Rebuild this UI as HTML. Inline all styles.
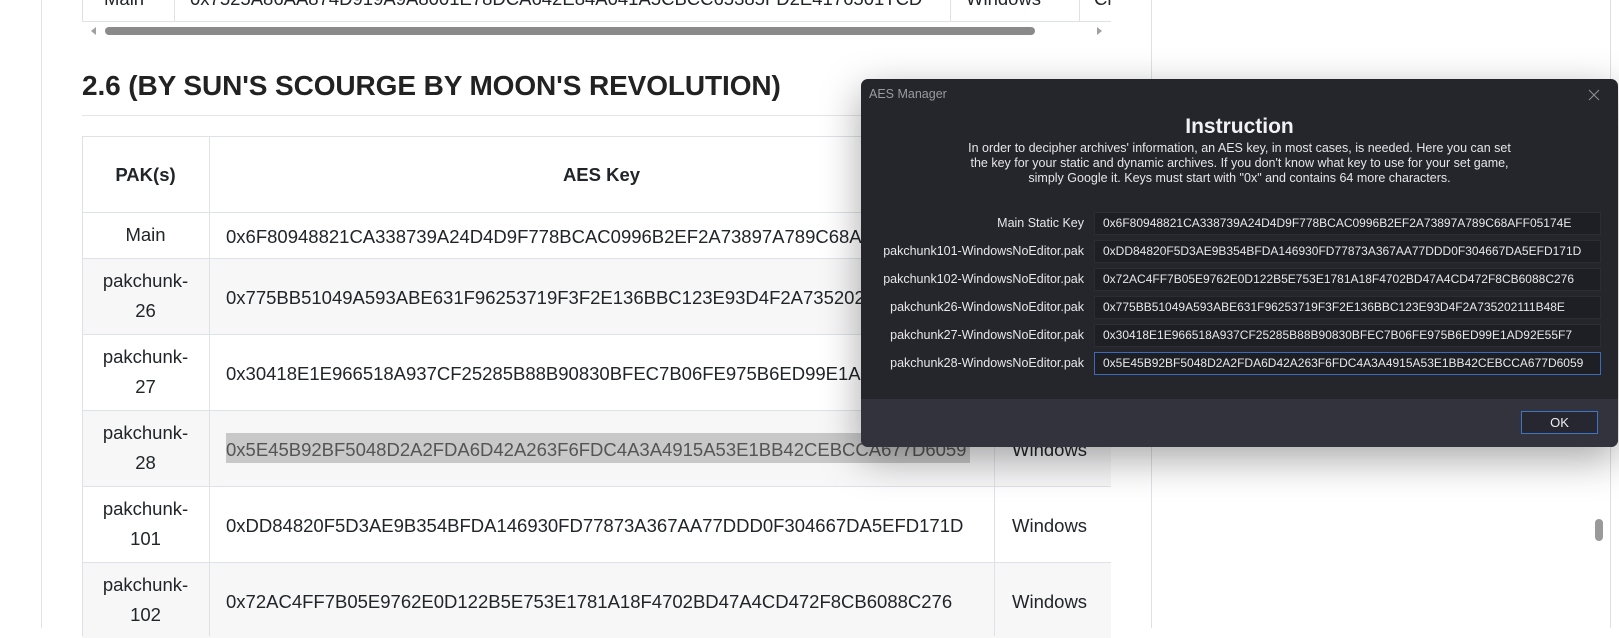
<!DOCTYPE html>
<html><head><meta charset="utf-8"><style>
*{margin:0;padding:0;box-sizing:border-box}
body{width:1619px;height:628px;overflow:hidden;background:#fff;font-family:"Liberation Sans",sans-serif;color:#212529;position:relative}
.a{position:absolute}
.vl{position:absolute;width:1px;background:#dee2e6}
.hl{position:absolute;height:1px;background:#dee2e6}
.t{position:absolute;font-size:18.5px;white-space:nowrap}
.c{text-align:center;line-height:30px}
.dl{position:absolute;right:535px;font-size:12.5px;color:#e8e8ea;white-space:nowrap;text-align:right}
.in{position:absolute;left:1094px;width:507px;height:23px;background:#1e1f24;border:1px solid #2c2d33;color:#e8e8ea;font-size:12px;line-height:21px;padding-left:8px;white-space:nowrap;overflow:hidden}
</style></head><body>
<div class="vl" style="left:41px;top:0;height:628px"></div>
<div class="vl" style="left:1151px;top:0;height:628px"></div>

<div class="hl" style="left:82px;top:21px;width:1029px"></div>
<div class="vl" style="left:82px;top:0;height:22px"></div>
<div class="vl" style="left:174px;top:0;height:22px"></div>
<div class="vl" style="left:950px;top:0;height:22px"></div>
<div class="vl" style="left:1079px;top:0;height:22px"></div>
<div class="t" style="left:104px;top:-12px">Main</div>
<div class="t" style="left:190px;top:-12px">0x7525A86AA874D919A9A8001E78DCA642E84A041A5CBCC65385FD2E4176501TCD</div>
<div class="t" style="left:966px;top:-12px">Windows</div>
<div class="t" style="left:1094px;top:-12px;width:17px;overflow:hidden">Cl</div>
<div class="a" style="left:91px;top:27px;width:0;height:0;border-top:4px solid transparent;border-bottom:4px solid transparent;border-right:5px solid #a0a0a0"></div>
<div class="a" style="left:105px;top:27px;width:930px;height:8px;border-radius:4px;background:#8a8a8a"></div>
<div class="a" style="left:1097px;top:27px;width:0;height:0;border-top:4px solid transparent;border-bottom:4px solid transparent;border-left:5px solid #a0a0a0"></div>

<div class="a" style="left:82px;top:70px;font-size:28px;font-weight:bold;color:#222;white-space:nowrap;letter-spacing:-0.1px">2.6 (BY SUN'S SCOURGE BY MOON'S REVOLUTION)</div>
<div class="hl" style="left:82px;top:115px;width:1029px;background:#e5e5e5"></div>

<div class="a" style="left:82px;top:258px;width:1029px;height:76px;background:#f7f7f8"></div>
<div class="a" style="left:82px;top:410px;width:1029px;height:76px;background:#f7f7f8"></div>
<div class="a" style="left:82px;top:562px;width:1029px;height:76px;background:#f7f7f8"></div>
<div class="hl" style="left:82px;top:136px;width:1029px"></div>
<div class="hl" style="left:82px;top:212px;width:1029px"></div>
<div class="hl" style="left:82px;top:258px;width:1029px"></div>
<div class="hl" style="left:82px;top:334px;width:1029px"></div>
<div class="hl" style="left:82px;top:410px;width:1029px"></div>
<div class="hl" style="left:82px;top:486px;width:1029px"></div>
<div class="hl" style="left:82px;top:562px;width:1029px"></div>
<div class="vl" style="left:82px;top:136px;height:500px"></div>
<div class="vl" style="left:209px;top:136px;height:500px"></div>
<div class="vl" style="left:994px;top:136px;height:500px"></div>

<div class="t c" style="left:82px;width:127px;top:160px;font-weight:bold">PAK(s)</div>
<div class="t c" style="left:209px;width:785px;top:160px;font-weight:bold">AES Key</div>
<div class="t c" style="left:82px;width:127px;top:220px">Main</div>
<div class="t" style="left:226px;top:226px">0x6F80948821CA338739A24D4D9F778BCAC0996B2EF2A73897A789C68AFF05174E</div>
<div class="t c" style="left:82px;width:127px;top:266px">pakchunk-<br>26</div>
<div class="t" style="left:226px;top:287px">0x775BB51049A593ABE631F96253719F3F2E136BBC123E93D4F2A735202111B48E</div>
<div class="t c" style="left:82px;width:127px;top:342px">pakchunk-<br>27</div>
<div class="t" style="left:226px;top:363px">0x30418E1E966518A937CF25285B88B90830BFEC7B06FE975B6ED99E1AD92E55F7</div>
<div class="t c" style="left:82px;width:127px;top:418px">pakchunk-<br>28</div>
<div class="a" style="left:226px;top:433px;width:744px;height:30px;background:#c8c8c8"></div>
<div class="t" style="left:226px;top:439px;color:#555">0x5E45B92BF5048D2A2FDA6D42A263F6FDC4A3A4915A53E1BB42CEBCCA677D6059</div>
<div class="t" style="left:1012px;top:439px">Windows</div>
<div class="t c" style="left:82px;width:127px;top:494px">pakchunk-<br>101</div>
<div class="t" style="left:226px;top:515px">0xDD84820F5D3AE9B354BFDA146930FD77873A367AA77DDD0F304667DA5EFD171D</div>
<div class="t" style="left:1012px;top:515px">Windows</div>
<div class="t c" style="left:82px;width:127px;top:570px">pakchunk-<br>102</div>
<div class="t" style="left:226px;top:591px">0x72AC4FF7B05E9762E0D122B5E753E1781A18F4702BD47A4CD472F8CB6088C276</div>
<div class="t" style="left:1012px;top:591px">Windows</div>

<div class="vl" style="left:1610px;top:0;height:628px;background:#e0e0e0"></div>
<div class="a" style="left:1595px;top:519px;width:8px;height:22px;border-radius:4px;background:#9a9a9a"></div>

<div class="a" style="left:861px;top:79px;width:757px;height:368px;background:#25262b;border-radius:7px;box-shadow:0 12px 40px rgba(0,0,0,0.35);overflow:hidden">
  <div class="a" style="left:0;top:320px;width:757px;height:48px;background:#32333d"></div>
  <div class="a" style="left:660px;top:332px;width:77px;height:23px;border:1px solid #3f73c4;background:#262731;color:#eee;font-size:13px;text-align:center;line-height:21px">OK</div>
</div>
<div class="a" style="left:869px;top:87px;font-size:12.5px;color:#9a9aa0">AES Manager</div>
<svg class="a" style="left:1588px;top:89px" width="12" height="12" viewBox="0 0 12 12"><path d="M1 1L11 11M11 1L1 11" stroke="#8c8c92" stroke-width="1.1"/></svg>
<div class="a" style="left:861px;width:757px;top:115px;text-align:center;font-size:21px;font-weight:bold;color:#f2f2f4">Instruction</div>
<div class="a" style="left:861px;width:757px;top:141px;text-align:center;font-size:12.5px;line-height:15px;color:#e6e6e8">In order to decipher archives' information, an AES key, in most cases, is needed. Here you can set<br>the key for your static and dynamic archives. If you don't know what key to use for your set game,<br>simply Google it. Keys must start with "0x" and contains 64 more characters.</div>

<div class="dl" style="top:216px">Main Static Key</div>
<div class="in" style="top:212px">0x6F80948821CA338739A24D4D9F778BCAC0996B2EF2A73897A789C68AFF05174E</div>
<div class="dl" style="top:244px">pakchunk101-WindowsNoEditor.pak</div>
<div class="in" style="top:240px">0xDD84820F5D3AE9B354BFDA146930FD77873A367AA77DDD0F304667DA5EFD171D</div>
<div class="dl" style="top:272px">pakchunk102-WindowsNoEditor.pak</div>
<div class="in" style="top:268px">0x72AC4FF7B05E9762E0D122B5E753E1781A18F4702BD47A4CD472F8CB6088C276</div>
<div class="dl" style="top:300px">pakchunk26-WindowsNoEditor.pak</div>
<div class="in" style="top:296px">0x775BB51049A593ABE631F96253719F3F2E136BBC123E93D4F2A735202111B48E</div>
<div class="dl" style="top:328px">pakchunk27-WindowsNoEditor.pak</div>
<div class="in" style="top:324px">0x30418E1E966518A937CF25285B88B90830BFEC7B06FE975B6ED99E1AD92E55F7</div>
<div class="dl" style="top:356px">pakchunk28-WindowsNoEditor.pak</div>
<div class="in" style="top:352px;border-color:#3b6bb8">0x5E45B92BF5048D2A2FDA6D42A263F6FDC4A3A4915A53E1BB42CEBCCA677D6059</div>
</body></html>
